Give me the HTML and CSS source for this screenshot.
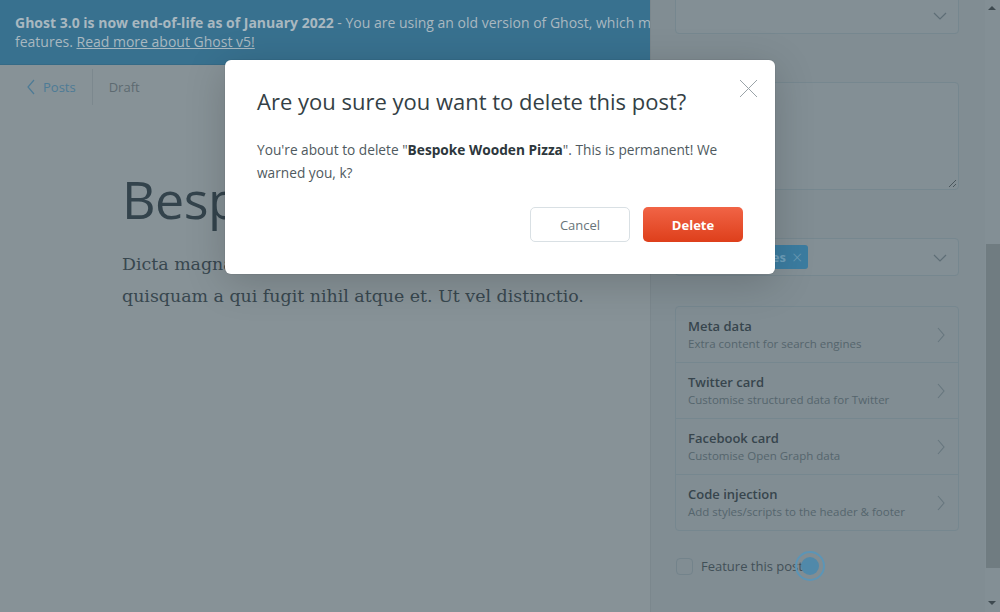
FILE: index.html
```html
<!DOCTYPE html>
<html>
<head>
<meta charset="utf-8">
<link rel="stylesheet" href="styles.css">
</head>
<body>
<div class="app">
  <div class="banner">
    <b>Ghost 3.0 is now end-of-life as of January 2022</b> - You are using an old version of Ghost, which means you don't have access to the latest features. <a href="#">Read more about Ghost v5!</a>
  </div>
  <div class="editor">
    <nav class="crumbs">
      <a class="back" href="#"><svg width="10" height="16" viewBox="0 0 10 16"><polyline points="8,1 2,8 8,15" fill="none" stroke="currentColor" stroke-width="1.2"/></svg>Posts</a>
      <span class="sep"></span>
      <span class="status">Draft</span>
    </nav>
    <div class="content">
      <h1 class="post-title">Bespoke Wooden Pizza</h1>
      <p class="post-body">Dicta magnam voluptatem molestiae vero ut mollitia quisquam a qui fugit nihil atque et. Ut vel distinctio.</p>
    </div>
  </div>
</div>

<aside class="settings">
  <div class="settings-inner">
    <div class="field select first">
      <svg class="chev-down" width="14" height="8" viewBox="0 0 14 8"><polyline points="1,1 7,7 13,1" fill="none" stroke="currentColor" stroke-width="1.2"/></svg>
    </div>
    <label class="label">Excerpt</label>
    <div class="field textarea">
      <svg class="grip" width="9" height="9" viewBox="0 0 9 9"><line x1="1" y1="8" x2="8" y2="1" stroke="currentColor"/><line x1="5" y1="8" x2="8" y2="5" stroke="currentColor"/></svg>
    </div>
    <label class="label">Tags</label>
    <div class="field select tags">
      <span class="tag">Getting Started Stories <span class="tag-x">×</span></span>
      <svg class="chev-down" width="14" height="8" viewBox="0 0 14 8"><polyline points="1,1 7,7 13,1" fill="none" stroke="currentColor" stroke-width="1.2"/></svg>
    </div>
    <ul class="menu">
      <li><div><div class="m-title">Meta data</div><div class="m-sub">Extra content for search engines</div></div><svg class="chev" width="8" height="16" viewBox="0 0 8 16"><polyline points="1,1 7,8 1,15" fill="none" stroke="currentColor" stroke-width="1.1"/></svg></li>
      <li><div><div class="m-title">Twitter card</div><div class="m-sub">Customise structured data for Twitter</div></div><svg class="chev" width="8" height="16" viewBox="0 0 8 16"><polyline points="1,1 7,8 1,15" fill="none" stroke="currentColor" stroke-width="1.1"/></svg></li>
      <li><div><div class="m-title">Facebook card</div><div class="m-sub">Customise Open Graph data</div></div><svg class="chev" width="8" height="16" viewBox="0 0 8 16"><polyline points="1,1 7,8 1,15" fill="none" stroke="currentColor" stroke-width="1.1"/></svg></li>
      <li><div><div class="m-title">Code injection</div><div class="m-sub">Add styles/scripts to the header &amp; footer</div></div><svg class="chev" width="8" height="16" viewBox="0 0 8 16"><polyline points="1,1 7,8 1,15" fill="none" stroke="currentColor" stroke-width="1.1"/></svg></li>
    </ul>
    <div class="feature">
      <span class="checkbox"></span>
      <span class="feature-label">Feature this post</span>
      <span class="pulse"></span>
    </div>
  </div>
  <div class="scrollbar">
    <span class="arrow up"></span>
    <span class="thumb"></span>
    <span class="arrow down"></span>
  </div>
</aside>

<div class="modal">
  <button class="close" aria-label="Close"><svg width="19" height="19" viewBox="0 0 19 19"><line x1="1" y1="1" x2="18" y2="18" stroke="currentColor"/><line x1="18" y1="1" x2="1" y2="18" stroke="currentColor"/></svg></button>
  <h2 class="modal-title">Are you sure you want to delete this post?</h2>
  <p class="modal-body">You're about to delete "<strong>Bespoke Wooden Pizza</strong>". This is permanent! We warned you, k?</p>
  <div class="modal-actions">
    <button class="btn cancel">Cancel</button>
    <button class="btn delete">Delete</button>
  </div>
</div>
</body>
</html>
```

FILE: styles.css
```css
* { box-sizing: border-box; }
html, body { margin: 0; height: 100%; }
body {
  font-family: "Open Sans", "Noto Sans", sans-serif;
  background: #879297;
  overflow: hidden;
  position: relative;
  width: 1000px;
  height: 612px;
}
.app { display: flex; flex-direction: column; height: 100%; }

.banner {
  background: #38718f;
  color: #a9b8c0;
  font-size: 14px;
  line-height: 19px;
  padding: 13px 45px 14px 15px;
  height: 65px;
  border-bottom: 1px solid #356a86;
}
.banner b { font-weight: 700; }
.banner a { color: #a9b8c0; text-decoration: underline; }

.editor { flex: 1; }
.crumbs {
  display: flex;
  align-items: center;
  height: 44px;
  padding-left: 26px;
  font-size: 13px;
}
.back {
  display: flex; align-items: center; gap: 7px;
  color: #4d7b96;
  text-decoration: none;
}
.sep { width: 1px; height: 36px; background: #7c888e; margin: 0 16px 0 16px; }
.status { color: #5d6a71; }

.content { padding: 55px 0 0 122px; }
.post-title {
  margin: 0;
  font-family: "Open Sans", sans-serif;
  font-weight: 400;
  font-size: 52px;
  line-height: 70px;
  color: #33434c;
  letter-spacing: -0.5px;
  white-space: nowrap;
}
.post-body {
  margin: 14px 0 0;
  width: 475px;
  font-family: "DejaVu Serif", Georgia, serif;
  font-size: 17.4px;
  line-height: 32px;
  color: #38474f;
}

/* settings sidebar, overlays the banner */
.settings {
  position: absolute;
  top: 0; right: 0; bottom: 0;
  width: 350px;
  display: flex;
  background: #818d93;
  border-left: 1px solid #7b878d;
}
.settings-inner { flex: 1; padding: 0 26px 0 24px; }
.field {
  position: relative;
  border: 1px solid #76878f;
  border-radius: 4px;
  background: #838f95;
}
.select { height: 38px; display: flex; align-items: center; }
.first { margin-top: -4px; }
.chev-down { position: absolute; right: 11px; top: 15px; color: #5e6e76; }
.label { display: block; height: 48px; font-size: 13px; color: #3d4a51; padding-top: 27px; line-height: 16px; }
.textarea { height: 108px; }
.grip { position: absolute; right: 1px; bottom: 1px; color: #4a565c; }
.tags { padding-left: 6px; overflow: hidden; }
.tag {
  background: #3b7ca0;
  color: #6fa0bb;
  font-weight: 700;
  font-size: 13px;
  height: 24px; line-height: 24px;
  padding: 0 6px 0 8px;
  border-radius: 3px;
  margin-left: -52px;
  display: inline-flex; align-items: center; gap: 6px;
  white-space: nowrap;
}
.tag-x { font-weight: 300; font-size: 18px; color: #6e9db6; }

.menu {
  list-style: none; margin: 30px 0 0; padding: 0;
  border: 1px solid #76878f; border-radius: 4px;
}
.menu li {
  display: flex; align-items: center; justify-content: space-between;
  height: 56px; padding: 0 13px 0 12px;
  border-top: 1px solid #76878f;
}
.menu li:first-child { border-top: 0; height: 55px; }
.m-title { font-size: 13px; font-weight: 600; color: #37454d; line-height: 18px; }
.m-sub { font-size: 11.5px; color: #55656d; line-height: 17px; }
.chev { color: #66767e; }

.feature { display: flex; align-items: center; margin-top: 26px; height: 18px; position: relative; }
.checkbox {
  width: 17px; height: 17px;
  border: 1px solid #73838b; border-radius: 4px;
  margin-left: 1px;
}
.feature-label { margin-left: 8px; font-size: 13px; color: #415058; }
.pulse {
  position: absolute; left: 120px; top: -6px;
  width: 30px; height: 30px; border-radius: 50%;
  border: 2px solid #5c95b6;
}
.pulse::after {
  content: ""; position: absolute; left: 4px; top: 4px;
  width: 18px; height: 18px; border-radius: 50%;
  background: #5089aa;
}

.scrollbar {
  width: 15px; position: relative; background: #838f95;
}
.thumb { position: absolute; left: 1px; right: 0; top: 244px; height: 324px; background: #707c81; }
.arrow { position: absolute; left: 3px; width: 0; height: 0; border-left: 4px solid transparent; border-right: 4px solid transparent; }
.arrow.up { top: 6px; border-bottom: 4px solid #3e4a50; }
.arrow.down { bottom: 7px; border-top: 4px solid #3e4a50; }

/* modal */
.modal {
  position: absolute;
  left: 225px; top: 60px;
  width: 550px;
  background: #fff;
  border-radius: 6px;
  padding: 26px 32px 32px;
  box-shadow: 0 0 0 1px rgba(0,0,0,0.04), 0 8px 40px rgba(0,0,0,0.18);
}
.close {
  position: absolute; right: 17px; top: 19px;
  border: 0; background: none; padding: 0; color: #9aa3a8; cursor: pointer;
}
.close svg { display: block; }
.modal-title {
  margin: 0;
  font-size: 22px;
  font-weight: 400;
  line-height: 30px;
  color: #343f45;
}
.modal-body {
  margin: 22px 0 0;
  font-size: 13.7px;
  line-height: 23px;
  color: #4f5a60;
}
.modal-body strong { color: #2d373c; font-weight: 700; }
.modal-actions { display: flex; justify-content: flex-end; gap: 13px; margin-top: 23px; }
.btn {
  width: 100px; height: 35px;
  border-radius: 5px;
  font-family: inherit;
  font-size: 13px;
}
.cancel { background: #fff; border: 1px solid #d9e0e4; color: #687479; }
.delete {
  border: 0;
  background: linear-gradient(#f16446, #de3f1b);
  color: #fff;
  font-weight: 700;
  width: 100px;
}
```
